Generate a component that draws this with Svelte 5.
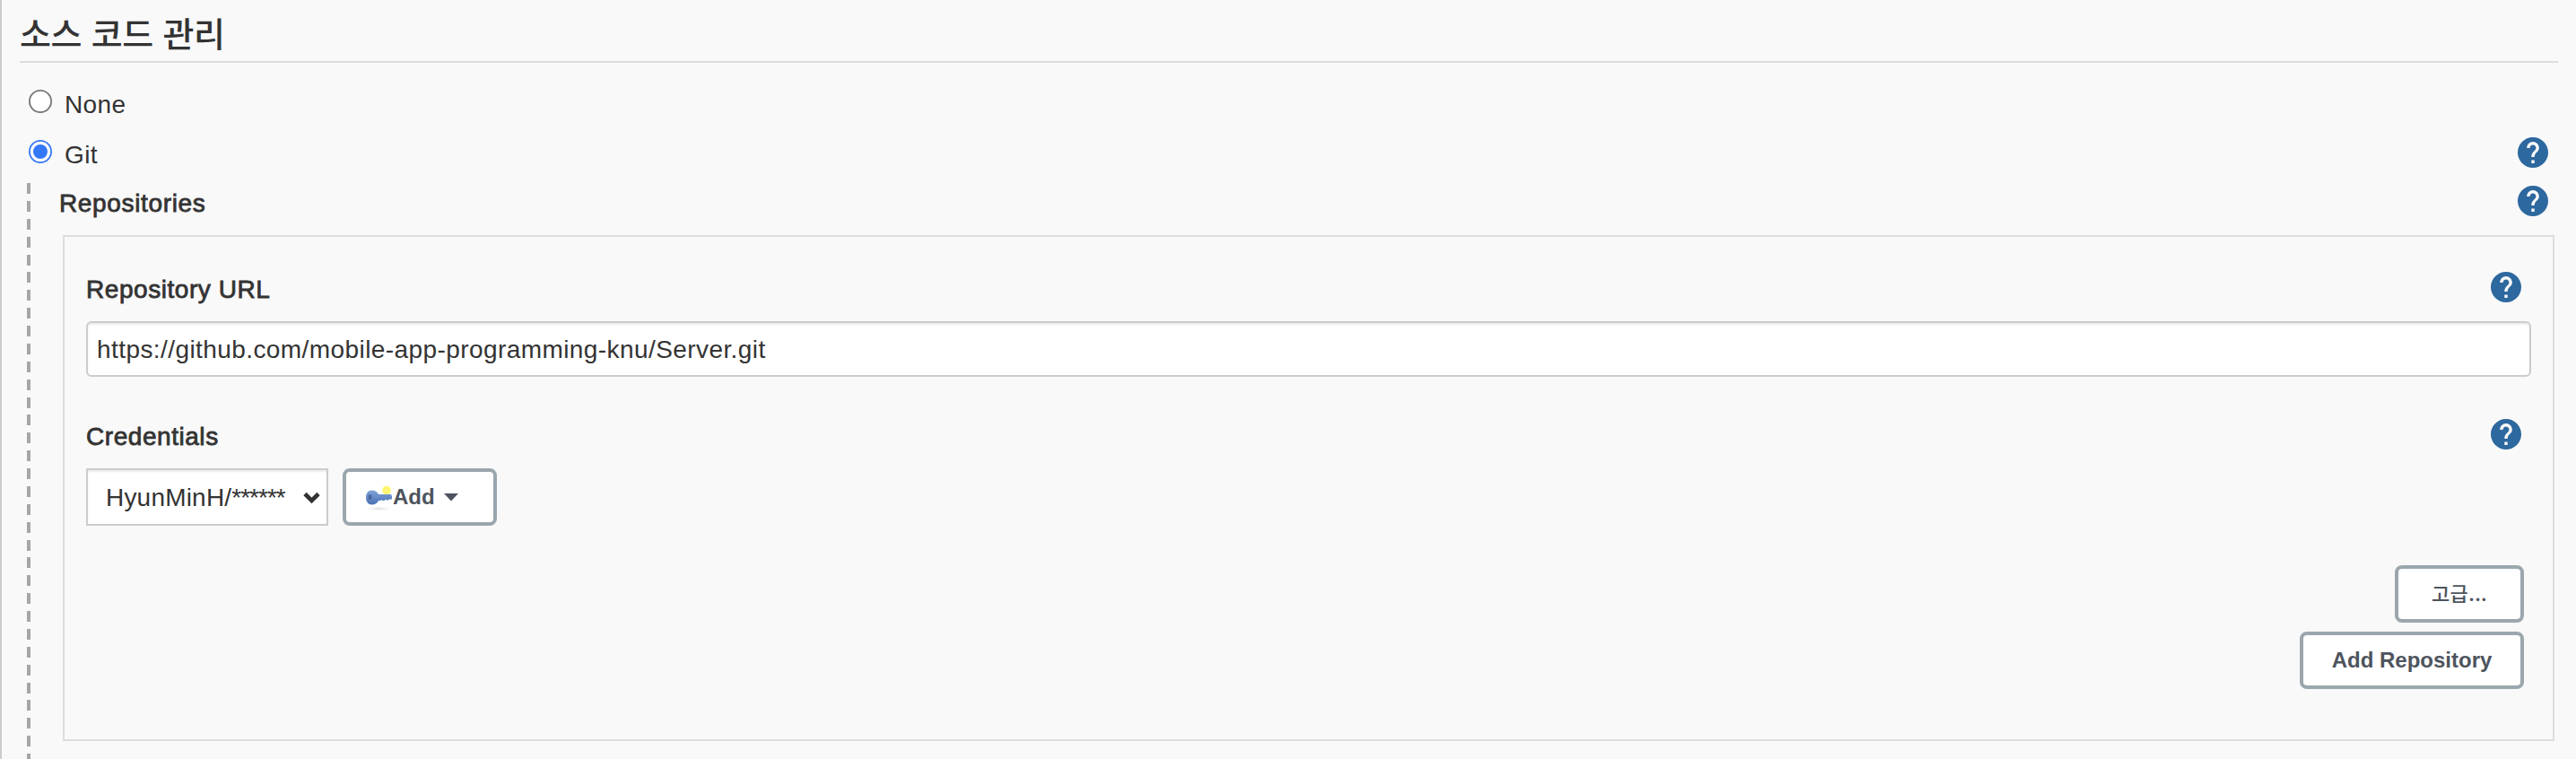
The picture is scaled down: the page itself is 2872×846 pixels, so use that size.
<script>
  let scm = $state('git');
  let url = $state('https://github.com/mobile-app-programming-knu/Server.git');
  const options = [
    { id: 'none', label: 'None' },
    { id: 'git', label: 'Git' }
  ];
</script>

{#snippet help()}
  <svg class="help" viewBox="2 2 20 20" aria-hidden="true">
    <path d="M12 2C6.48 2 2 6.48 2 12s4.48 10 10 10 10-4.48 10-10S17.52 2 12 2zm1 17h-2v-2h2v2zm2.07-7.75l-.9.92C13.45 12.9 13 13.5 13 15h-2v-.5c0-1.1.45-2.1 1.17-2.83l1.24-1.26c.37-.36.59-.86.59-1.41 0-1.1-.9-2-2-2s-2 .9-2 2H8c0-2.21 1.79-4 4-4s4 1.79 4 4c0 .88-.36 1.68-.93 2.25z" />
  </svg>
{/snippet}

<main>
  <h1>소스 코드 관리</h1>

  <div class="options">
    {#each options as option}
      <div class="option" role="radio" tabindex="0" aria-checked={scm === option.id}
        onclick={() => (scm = option.id)} onkeydown={() => (scm = option.id)}>
        <svg class="radio" class:on={scm === option.id} viewBox="0 0 26 26">
          <circle class="ring" cx="13" cy="13" r="12.1" />
          {#if scm === option.id}<circle class="dot" cx="13" cy="13" r="8" />{/if}
        </svg>
        <span>{option.label}</span>
        {#if option.id === 'git'}{@render help()}{/if}
      </div>
    {/each}
  </div>

  <section>
    <div class="label outer"><span>Repositories</span>{@render help()}</div>
    <div class="box">
      <div class="label"><span>Repository URL</span>{@render help()}</div>
      <input type="text" spellcheck="false" bind:value={url} />
      <div class="label second"><span>Credentials</span>{@render help()}</div>
      <div class="controls">
        <div class="select">
          <span>HyunMinH/<span class="stars">******</span></span>
          <svg width="20" height="14" viewBox="0 0 20 14"><path d="M2 2.5l7.5 7.5L17 2.5" /></svg>
        </div>
        <button class="add">
          <svg class="key" width="32" height="32" viewBox="0 0 32 32">
            <defs>
              <linearGradient id="metal" x1="0" y1="0" x2="0" y2="1">
                <stop offset="0" stop-color="#7fa3d8" />
                <stop offset="1" stop-color="#4a70b4" />
              </linearGradient>
              <radialGradient id="shade">
                <stop offset="0" stop-color="#ccc" stop-opacity=".7" />
                <stop offset="1" stop-color="#ddd" stop-opacity="0" />
              </radialGradient>
              <radialGradient id="glow">
                <stop offset="0" stop-color="#fffbc0" />
                <stop offset=".3" stop-color="#fff36a" />
                <stop offset=".7" stop-color="#fff56c" />
                <stop offset="1" stop-color="#fff89a" stop-opacity=".3" />
              </radialGradient>
            </defs>
            <ellipse cx="16" cy="29" rx="14" ry="2.2" fill="url(#shade)" />
            <circle cx="25" cy="8.5" r="5.5" fill="url(#glow)" />
            <path d="M8.5 8.500c3.800 0 6.500 2 7.500 4.500h14l1 2v3.500h-3l-1 1h-2l-1-1-1.500 1.500h-2l-1-1-1 1H16c-1 2.500-3.800 4.500-7.500 4.500C4.500 24.500 2 21 2 16.500s2.500-8 6.500-8z" fill="url(#metal)" />
            <ellipse cx="6.500" cy="16" rx="2" ry="3" fill="#3e5687" opacity=".65" />
          </svg>
          <span>Add</span>
          <svg class="caret" width="16" height="9" viewBox="0 0 16 9"><path d="M0 0h16L8 8.500z" /></svg>
        </button>
      </div>
      <div class="actions">
        <button class="advanced">고급...</button>
        <button class="repo">Add Repository</button>
      </div>
    </div>
  </section>
</main>

<style>
  :global(body) {
    background: #f9f9f9;
    overflow: hidden;
  }
  main {
    box-sizing: border-box;
    height: 846px;
    overflow: hidden;
    border-left: 2px solid #ccc;
    padding: 0 20px;
    color: #333;
    font: 28px/32px "Liberation Sans", Arial, "Noto Sans CJK KR", sans-serif;
  }
  h1 {
    box-sizing: border-box;
    height: 70px;
    margin: 0;
    padding-top: 9px;
    border-bottom: 2px solid #ddd;
    font: 500 38px/54px "Noto Sans CJK KR", sans-serif;
    letter-spacing: -0.4px;
    word-spacing: 2.5px;
  }
  .options {
    padding: 15px 11px 0 10px;
  }
  .option {
    display: flex;
    align-items: center;
    height: 56px;
    outline: none;
  }
  .option span {
    margin-left: 14px;
    padding-top: 8px;
    letter-spacing: 0.4px;
  }
  .radio {
    width: 26px;
    height: 26px;
  }
  .ring {
    fill: #fff;
    stroke: #767676;
    stroke-width: 1.8;
  }
  .on .ring {
    stroke: #3478f6;
  }
  .dot {
    fill: #3478f6;
  }
  .help {
    flex: none;
    width: 34px;
    height: 34px;
    margin-left: auto;
    fill: #2d689f;
  }
  .option .help {
    margin-top: 2px;
  }
  section {
    height: 642px;
    margin: 7px 4px 0 8px;
    padding-left: 36px;
    background: repeating-linear-gradient(#a6a6a6 0 12px, transparent 12px 19.875px) 0 0 / 4px 100% no-repeat;
  }
  .label {
    display: flex;
    align-items: center;
    height: 40px;
    letter-spacing: 0.55px;
    -webkit-text-stroke: 0.8px #333;
  }
  .label span {
    padding-top: 6px;
  }
  .outer {
    padding-right: 7px;
  }
  .outer span {
    letter-spacing: 0.65px;
  }
  .box {
    box-sizing: border-box;
    height: 564px;
    margin: 18px 0 0 4px;
    padding: 36px 24px 0;
    border: 2px solid #ddd;
  }
  .box .label {
    padding-right: 11px;
  }
  input {
    box-sizing: border-box;
    display: block;
    width: 100%;
    height: 62px;
    margin-top: 18px;
    padding: 2px 10px 0;
    border: 2px solid #ccc;
    border-radius: 6px;
    outline: none;
    background: #fff;
    box-shadow: inset 0 2px 2px rgba(0, 0, 0, 0.075);
    color: #333;
    font: inherit;
    letter-spacing: 0.42px;
  }
  .second {
    margin-top: 44px;
  }
  .controls {
    display: flex;
    gap: 16px;
    margin-top: 18px;
  }
  .select {
    box-sizing: border-box;
    display: flex;
    align-items: center;
    justify-content: space-between;
    width: 270px;
    height: 64px;
    padding: 1px 6px 0 20px;
    border: 2px solid #ccc;
    background: #fff;
    box-shadow: inset 0 2px 2px rgba(0, 0, 0, 0.075);
    letter-spacing: 0.2px;
  }
  .stars {
    letter-spacing: -1px;
  }
  .select path {
    fill: none;
    stroke: #333;
    stroke-width: 4.600;
  }
  button {
    box-sizing: border-box;
    height: 64px;
    padding: 0;
    border: 4px solid #9ba6ad;
    border-radius: 8px;
    background: #fff;
    color: #4d545d;
    font: bold 24px/28px "Liberation Sans", Arial, "Noto Sans CJK KR", sans-serif;
  }
  .add {
    display: flex;
    align-items: center;
    width: 172px;
    padding-left: 20px;
  }
  .caret {
    margin-left: 10px;
    fill: #4d545d;
  }
  .actions {
    display: flex;
    flex-direction: column;
    align-items: flex-end;
    gap: 10px;
    margin-top: 44px;
    padding-right: 8px;
  }
  .advanced {
    width: 144px;
    padding-bottom: 4px;
    font-family: "Noto Sans CJK KR", sans-serif;
    font-weight: 500;
    font-size: 22px;
    letter-spacing: 0.4px;
  }
  .repo {
    width: 250px;
  }
</style>
